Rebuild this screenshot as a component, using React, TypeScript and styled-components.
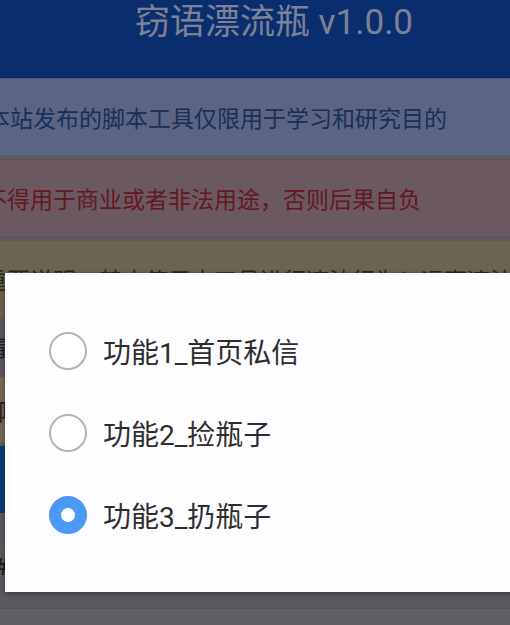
import React from 'react'
import styled, { createGlobalStyle } from 'styled-components'

const GlobalStyle = createGlobalStyle`
  html, body {
    margin: 0;
    padding: 0;
    overflow: hidden;
    background: #9996a0;
  }
  * {
    box-sizing: border-box;
  }
`

const FONT = `Roboto, "Noto Sans CJK SC", "Noto Sans", sans-serif`

const options = ['功能1_首页私信', '功能2_捡瓶子', '功能3_扔瓶子']

const App = () => {
  const selected = 2
  return (
    <>
      <GlobalStyle />
      <Page>
        <Header>
          <Title>窃语漂流瓶 v1.0.0</Title>
        </Header>
        <Content>
          <Alert $bg='#98a8da' $border='#8495c8' $color='#2a4f94' $indent={23}>
            本站发布的脚本工具仅限用于学习和研究目的
          </Alert>
          <Alert $bg='#b493a0' $border='#a6848f' $color='#a62a38' $indent={20}>
            不得用于商业或者非法用途，否则后果自负
          </Alert>
          <Alert $bg='#b2a787' $border='#a49a7a' $color='#4a4323' $indent={20}>
            重要说明：禁止使用本工具进行违法行为！远离违法犯罪
          </Alert>
          <FormRow>请选择需要运行的功能</FormRow>
          <Notice>脚本运行前请先打开无障碍服务</Notice>
          <RunButton>开始运行</RunButton>
          <Footnote># 使用说明</Footnote>
          <BottomBar />
        </Content>
        <Scrim />
        <Dialog>
          {options.map((label, i) => (
            <Option key={label}>
              <Radio $checked={i === selected} />
              <OptionText>{label}</OptionText>
            </Option>
          ))}
        </Dialog>
      </Page>
    </>
  )
}

const Page = styled.div`
  position: relative;
  width: 510px;
  height: 625px;
  overflow: hidden;
  background: #9996a0;
  font-family: ${FONT};
`

const Header = styled.div`
  height: 79px;
  background: #124bb7;
  border-bottom: 1px solid #96a2d4;
  display: flex;
  justify-content: center;
  padding-left: 38px;
  padding-top: 1px;
`

const Title = styled.h1`
  margin: 0;
  font-size: 35px;
  font-weight: 400;
  line-height: 44px;
  color: #cdd7fc;
  white-space: nowrap;
`

const Content = styled.div`
  margin-left: -36px;
  width: calc(100% + 36px);
  display: flex;
  flex-direction: column;
`

const Alert = styled.div<{ $bg: string; $border: string; $color: string; $indent: number }>`
  height: 78px;
  margin-bottom: 3px;
  display: flex;
  align-items: center;
  padding-left: ${(p) => p.$indent}px;
  background: ${(p) => p.$bg};
  border-top: 1px solid ${(p) => p.$border};
  border-bottom: 1px solid ${(p) => p.$border};
  color: ${(p) => p.$color};
  font-size: 23px;
  white-space: nowrap;
  &:first-child {
    margin-top: -1px;
  }
`

const FormRow = styled.div`
  height: 58px;
  margin-top: -4px;
  display: flex;
  align-items: center;
  padding-left: 20px;
  font-size: 23px;
  color: #333;
  border-bottom: 1px solid #88858e;
  white-space: nowrap;
`

const Notice = styled.div`
  height: 66px;
  margin-top: 2px;
  display: flex;
  align-items: center;
  padding-left: 20px;
  background: #c9b08e;
  font-size: 23px;
  color: #333;
  white-space: nowrap;
`

const RunButton = styled.div`
  height: 67px;
  margin-top: 3px;
  display: flex;
  align-items: center;
  justify-content: center;
  background: #1461cb;
  color: #fff;
  font-size: 23px;
`

const Footnote = styled.div`
  height: 77px;
  display: flex;
  align-items: center;
  padding-left: 30px;
  padding-top: 26px;
  font-size: 23px;
  color: #222;
  white-space: nowrap;
`

const BottomBar = styled.div`
  height: 60px;
  border-top: 1px solid #8d8a94;
  margin-top: 18px;
  background: #a19ea8;
`

const Scrim = styled.div`
  position: absolute;
  inset: 0;
  background: rgba(0, 0, 0, 0.4);
`

const Dialog = styled.div`
  position: absolute;
  left: 5px;
  top: 273px;
  width: 530px;
  height: 319px;
  padding: 37px 0 36px 44px;
  background: #fdfcff;
  box-shadow: 0 2px 6px rgba(0, 0, 0, 0.35);
  display: flex;
  flex-direction: column;
`

const Option = styled.div`
  height: 82px;
  display: flex;
  align-items: center;
  gap: 16px;
`

const Radio = styled.span<{ $checked: boolean }>`
  width: 38px;
  height: 38px;
  border-radius: 50%;
  flex-shrink: 0;
  border: ${(p) => (p.$checked ? '12px solid #4b99f5' : '2px solid #b3b3b3')};
  background: #fff;
`

const OptionText = styled.span`
  font-size: 28px;
  color: #2e2e2e;
  white-space: nowrap;
`

export default App
